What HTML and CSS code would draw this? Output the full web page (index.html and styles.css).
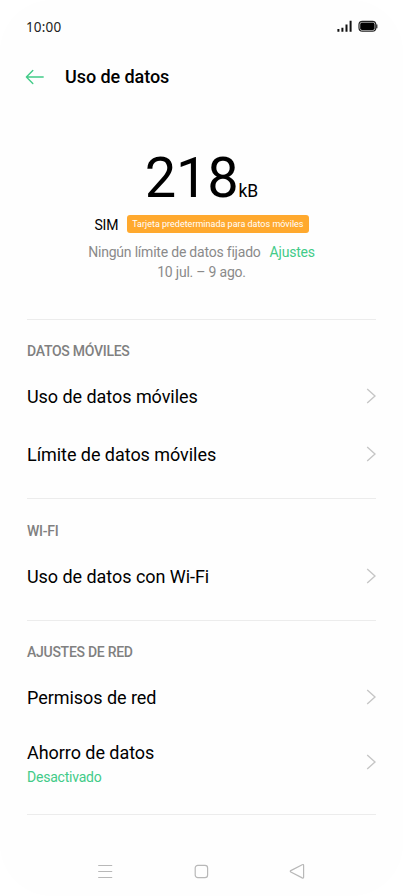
FILE: index.html
```html
<!DOCTYPE html>
<html lang="es">
<head>
    <meta charset="UTF-8">
    <meta name="viewport" content="width=device-width, initial-scale=1.0">
    <title>Uso de datos</title>
    <link rel="stylesheet" href="styles.css">
</head>
<body>
    <div class="pantalla">
        <div class="estado">
            <span class="hora">10:00</span>
            <svg class="iconos" width="42" height="14" viewBox="0 0 42 14">
                <path d="M1.4 9v2.8M5.4 7.8v4M9.5 4.4v7.4M13.6 0.8v11" stroke="#111" stroke-width="2" fill="none"/>
                <rect x="22" y="1.4" width="16.8" height="9.8" rx="3.4" fill="#fff" stroke="#222" stroke-width="1.2"/>
                <rect x="23.2" y="2.6" width="14.4" height="7.4" rx="1.8" fill="#000"/>
                <path d="M39.8 4.4v3.8" stroke="#222" stroke-width="1.2"/>
            </svg>
        </div>

        <header class="cabecera">
            <svg class="atras" width="20" height="16" viewBox="0 0 20 16">
                <path d="M18.2 8H1.4M7.8 1.6L1.4 8L7.8 14.4" fill="none" stroke="#42cb88" stroke-width="1.4" stroke-linecap="round" stroke-linejoin="round"/>
            </svg>
            <h1 class="titulo">Uso de datos</h1>
        </header>

        <div class="resumen">
            <div class="total"><span class="numero">218</span><span class="unidad">kB</span></div>
            <div class="sim">
                <span class="tarjeta">SIM</span>
                <span class="etiqueta">Tarjeta predeterminada para datos móviles</span>
            </div>
            <div class="limite">
                <span>Ningún límite de datos fijado</span>
                <a class="ajustes">Ajustes</a>
            </div>
            <div class="fechas">10 jul. – 9 ago.</div>
        </div>

        <main class="lista">
            <section class="grupo">
                <h2 class="nombre">DATOS MÓVILES</h2>
                <div class="fila">
                    <span>Uso de datos móviles</span>
                    <svg class="flecha" width="10" height="16" viewBox="0 0 10 16"><path d="M1.2 1L9 8L1.2 15"/></svg>
                </div>
                <div class="fila">
                    <span>Límite de datos móviles</span>
                    <svg class="flecha" width="10" height="16" viewBox="0 0 10 16"><path d="M1.2 1L9 8L1.2 15"/></svg>
                </div>
            </section>

            <section class="grupo wifi">
                <h2 class="nombre">WI-FI</h2>
                <div class="fila">
                    <span>Uso de datos con Wi-Fi</span>
                    <svg class="flecha" width="10" height="16" viewBox="0 0 10 16"><path d="M1.2 1L9 8L1.2 15"/></svg>
                </div>
            </section>

            <section class="grupo red">
                <h2 class="nombre">AJUSTES DE RED</h2>
                <div class="fila">
                    <span>Permisos de red</span>
                    <svg class="flecha" width="10" height="16" viewBox="0 0 10 16"><path d="M1.2 1L9 8L1.2 15"/></svg>
                </div>
                <div class="fila doble">
                    <div class="textos">
                        <div>Ahorro de datos</div>
                        <div class="valor">Desactivado</div>
                    </div>
                    <svg class="flecha" width="10" height="16" viewBox="0 0 10 16"><path d="M1.2 1L9 8L1.2 15"/></svg>
                </div>
            </section>
        </main>

        <nav class="navegacion">
            <svg width="16" height="16" viewBox="0 0 16 16"><path d="M1.2 2.5h14M1.2 8.5h14M1.2 14.5h14"/></svg>
            <svg width="16" height="16" viewBox="0 0 16 16"><rect x="2.2" y="2.3" width="12.4" height="12.4" rx="2.6"/></svg>
            <svg width="16" height="16" viewBox="0 0 16 16"><path d="M13.2 1.7Q14.6 1.1 14.6 2.5V14.1Q14.6 15.5 13.2 14.9L1.8 9Q0.8 8.3 1.8 7.6Z"/></svg>
        </nav>
    </div>
</body>
</html>
```

FILE: styles.css
```css
* {
    box-sizing: border-box;
}

body {
    margin: 0;
    background-color: #fff;
    font-family: Roboto, "Liberation Sans", sans-serif;
    color: #000;
}

h1, h2 {
    margin: 0;
}

.pantalla {
    width: 403px;
    height: 896px;
    background-color: #fefefe;
    border-radius: 52px;
    overflow: hidden;
}

.estado {
    display: flex;
    justify-content: space-between;
    align-items: center;
    height: 54px;
    padding: 0 24px 0 26px;
}

.hora {
    font-family: "Noto Sans", sans-serif;
    font-size: 13.5px;
    letter-spacing: 0.15px;
    color: #222;
}

.cabecera {
    display: flex;
    align-items: center;
    gap: 20px;
    height: 46px;
    padding-left: 25px;
}

.titulo {
    padding-bottom: 2px;
    font-size: 18px;
    font-weight: 500;
    letter-spacing: -0.07px;
}

.resumen {
    display: flex;
    flex-direction: column;
    align-items: center;
    height: 219px;
    padding-top: 45px;
    font-size: 14px;
    letter-spacing: -0.21px;
    color: #8a8a8a;
}

.total {
    height: 66px;
    line-height: 66px;
    letter-spacing: 0;
    color: #000;
}

.numero {
    font-size: 56px;
    letter-spacing: -0.3px;
}

.unidad {
    font-size: 17.5px;
}

.sim {
    display: flex;
    align-items: center;
    gap: 9px;
    height: 26px;
    color: #000;
}

.tarjeta {
    padding-top: 2px;
}

.etiqueta {
    height: 18px;
    padding: 0 5px;
    border-radius: 3px;
    background-color: #ffa92e;
    color: #fff;
    font-size: 9px;
    letter-spacing: 0;
    line-height: 18px;
}

.limite {
    display: flex;
    gap: 9px;
    margin-top: 5px;
    line-height: 20px;
}

.ajustes {
    color: #42cb88;
}

.fechas {
    line-height: 21px;
}

.lista {
    margin: 0 27px;
    border-bottom: 1px solid #ececec;
}

.grupo {
    border-top: 1px solid #ececec;
    padding: 22px 0 15px;
}

.wifi {
    padding-top: 23px;
}

.red {
    padding-bottom: 16px;
}

.nombre {
    margin-bottom: 5px;
    font-size: 14px;
    font-weight: 500;
    letter-spacing: -0.27px;
    line-height: 19px;
    padding-bottom: 1px;
    color: #808080;
}

.fila {
    display: flex;
    justify-content: space-between;
    align-items: center;
    height: 58px;
    font-size: 18px;
    letter-spacing: -0.05px;
}

.doble {
    height: 72px;
}

.textos {
    padding-top: 2px;
}

.valor {
    margin-top: 6px;
    font-size: 14px;
    letter-spacing: -0.22px;
    color: #42cb88;
}

.flecha {
    fill: none;
    stroke: #c6c6c6;
    stroke-width: 1.4;
}

.navegacion {
    display: flex;
    justify-content: space-between;
    margin-top: 48px;
    padding: 0 98px 0 97px;
}

.navegacion svg {
    fill: none;
    stroke: #b8b8b8;
    stroke-width: 1.2;
}
```
